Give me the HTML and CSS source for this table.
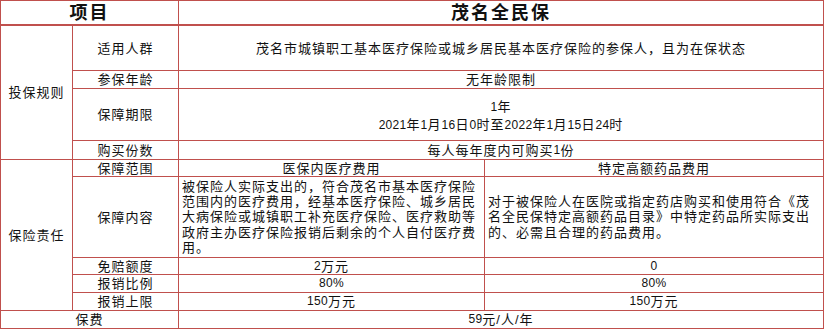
FILE: index.html
```html
<!DOCTYPE html>
<html lang="zh-CN">
<head>
<meta charset="utf-8">
<title>茂名全民保</title>
<link rel="stylesheet" href="styles.css">
</head>
<body>
<div class="sheet">
  <div class="cell head span2">项目</div>
  <div class="cell head span2">茂名全民保</div>

  <div class="cell group rows4">投保规则</div>
  <div class="cell">适用人群</div>
  <div class="cell span2">茂名市城镇职工基本医疗保险或城乡居民基本医疗保险的参保人，且为在保状态</div>
  <div class="cell">参保年龄</div>
  <div class="cell span2">无年龄限制</div>
  <div class="cell">保障期限</div>
  <div class="cell span2 lines"><span class="num">1</span>年<br><span class="num">2021</span>年<span class="num">1</span>月<span class="num">16</span>日<span class="num">0</span>时至<span class="num">2022</span>年<span class="num">1</span>月<span class="num">15</span>日<span class="num">24</span>时</div>
  <div class="cell">购买份数</div>
  <div class="cell span2">每人每年度内可购买<span class="num">1</span>份</div>

  <div class="cell group rows5">保险责任</div>
  <div class="cell">保障范围</div>
  <div class="cell">医保内医疗费用</div>
  <div class="cell">特定高额药品费用</div>
  <div class="cell">保障内容</div>
  <div class="cell para">被保险人实际支出的，符合茂名市基本医疗保险范围内的医疗费用，经基本医疗保险、城乡居民大病保险或城镇职工补充医疗保险、医疗救助等政府主办医疗保险报销后剩余的个人自付医疗费用。</div>
  <div class="cell para">对于被保险人在医院或指定药店购买和使用符合《茂名全民保特定高额药品目录》中特定药品所实际支出的、必需且合理的药品费用。</div>
  <div class="cell">免赔额度</div>
  <div class="cell"><span class="num">2</span>万元</div>
  <div class="cell"><span class="num">0</span></div>
  <div class="cell">报销比例</div>
  <div class="cell"><span class="num">80%</span></div>
  <div class="cell"><span class="num">80%</span></div>
  <div class="cell">报销上限</div>
  <div class="cell"><span class="num">150</span>万元</div>
  <div class="cell"><span class="num">150</span>万元</div>

  <div class="cell span2">保费</div>
  <div class="cell span2"><span class="num">59</span>元/人/年</div>
</div>
</body>
</html>
```

FILE: styles.css
```css
html, body {
  margin: 0;
  padding: 0;
  background: #ffffff;
}

.sheet {
  display: grid;
  grid-template-columns: 72px 106px 306px 339px;
  grid-template-rows: 25px 45px 18px 52px 19px 17px 81px 17px 18px 18px 18px;
  width: 824px;
  border-top: 1px solid #c0504d;
  border-left: 1px solid #c0504d;
  box-sizing: border-box;
  font-family: "Liberation Sans", "Noto Sans CJK SC", sans-serif;
  font-size: 13px;
  letter-spacing: 1px;
  color: #111111;
}

.cell {
  display: flex;
  align-items: center;
  justify-content: center;
  text-align: center;
  border-right: 1px solid #c0504d;
  border-bottom: 1px solid #c0504d;
  box-sizing: border-box;
  line-height: 15px;
  white-space: nowrap;
  overflow: hidden;
}

.lines {
  display: block;
  padding-top: 9px;
  line-height: 17px;
}

.num {
  font-size: 12px;
  letter-spacing: 0.3px;
}

.span2 {
  grid-column: span 2;
}

.rows4 {
  grid-row: span 4;
}

.rows5 {
  grid-row: span 5;
}

.head {
  font-size: 18px;
  font-weight: bold;
  letter-spacing: 2px;
  border-bottom-width: 2px;
  line-height: 22px;
}

.para {
  white-space: normal;
  text-align: left;
  justify-content: flex-start;
  line-height: 15.3px;
  padding: 0 2px 0 3px;
}
```
